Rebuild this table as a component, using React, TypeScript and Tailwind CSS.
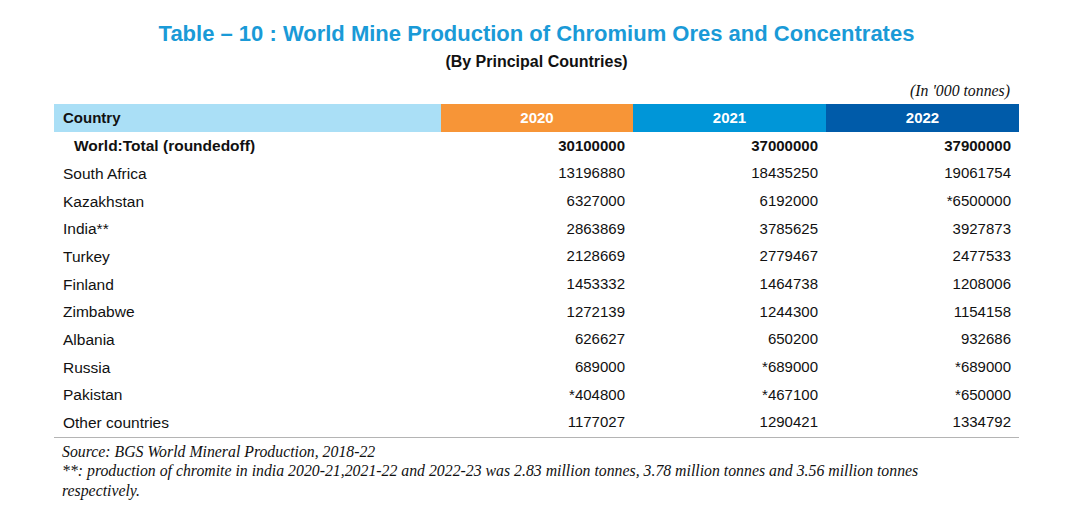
const rows: Array<{ country: string; v: [string, string, string]; bold?: boolean }> = [
  { country: "World:Total (roundedoff)", v: ["30100000", "37000000", "37900000"], bold: true },
  { country: "South Africa", v: ["13196880", "18435250", "19061754"] },
  { country: "Kazakhstan", v: ["6327000", "6192000", "*6500000"] },
  { country: "India**", v: ["2863869", "3785625", "3927873"] },
  { country: "Turkey", v: ["2128669", "2779467", "2477533"] },
  { country: "Finland", v: ["1453332", "1464738", "1208006"] },
  { country: "Zimbabwe", v: ["1272139", "1244300", "1154158"] },
  { country: "Albania", v: ["626627", "650200", "932686"] },
  { country: "Russia", v: ["689000", "*689000", "*689000"] },
  { country: "Pakistan", v: ["*404800", "*467100", "*650000"] },
  { country: "Other countries", v: ["1177027", "1290421", "1334792"] },
];

const App = () => {
  return (
    <div className="w-[1081px] h-[513px] bg-white text-[#111] font-['Liberation_Sans',Arial,sans-serif] pt-[20px]">
      <div className="ml-[54px] w-[965px]">
        <h1 className="text-center text-[22px] leading-[28px] font-bold text-[#1a9ad7]">
          Table – 10 : World Mine Production of Chromium Ores and Concentrates
        </h1>
        <p className="mt-[4px] text-center text-[16px] leading-[20px] font-bold">(By Principal Countries)</p>

        <p className="mt-[10px] pr-[9px] text-right text-[15.8px] leading-[18px] italic font-['Liberation_Serif',serif]">
          (In '000 tonnes)
        </p>

        <div className="mt-[4px] grid grid-cols-[387px_192px_193px_193px] text-[15px]">
          {/* header */}
          <div className="h-[28px] flex items-center pl-[9px] font-bold bg-[#aadff6]">Country</div>
          <div className="h-[28px] flex items-center justify-center font-bold text-white bg-[#f79537]">2020</div>
          <div className="h-[28px] flex items-center justify-center font-bold text-white bg-[#0096d8]">2021</div>
          <div className="h-[28px] flex items-center justify-center font-bold text-white bg-[#005ba9]">2022</div>

          {rows.map((r) => (
            <div key={r.country} className={`contents ${r.bold ? "font-bold" : ""}`}>
              <div className={`h-[27.7px] flex items-center text-[15.5px] ${r.bold ? "pl-[20px]" : "pl-[9px]"}`}>
                {r.country}
              </div>
              {r.v.map((val, i) => (
                <div key={i} className="h-[27.7px] flex items-center justify-end pr-2">
                  {val}
                </div>
              ))}
            </div>
          ))}
        </div>
        <div className="border-t border-[#b4b4b4]" />

        <div className="mt-[4px] pl-[8px] text-[15.8px] leading-[19.5px] italic font-['Liberation_Serif',serif]">
          <p>Source: BGS World Mineral Production, 2018-22</p>
          <p className="w-[880px]">
            **: production of chromite in india 2020-21,2021-22 and 2022-23 was 2.83 million tonnes, 3.78 million
            tonnes and 3.56 million tonnes respectively.
          </p>
        </div>
      </div>
    </div>
  );
};

export default App;
